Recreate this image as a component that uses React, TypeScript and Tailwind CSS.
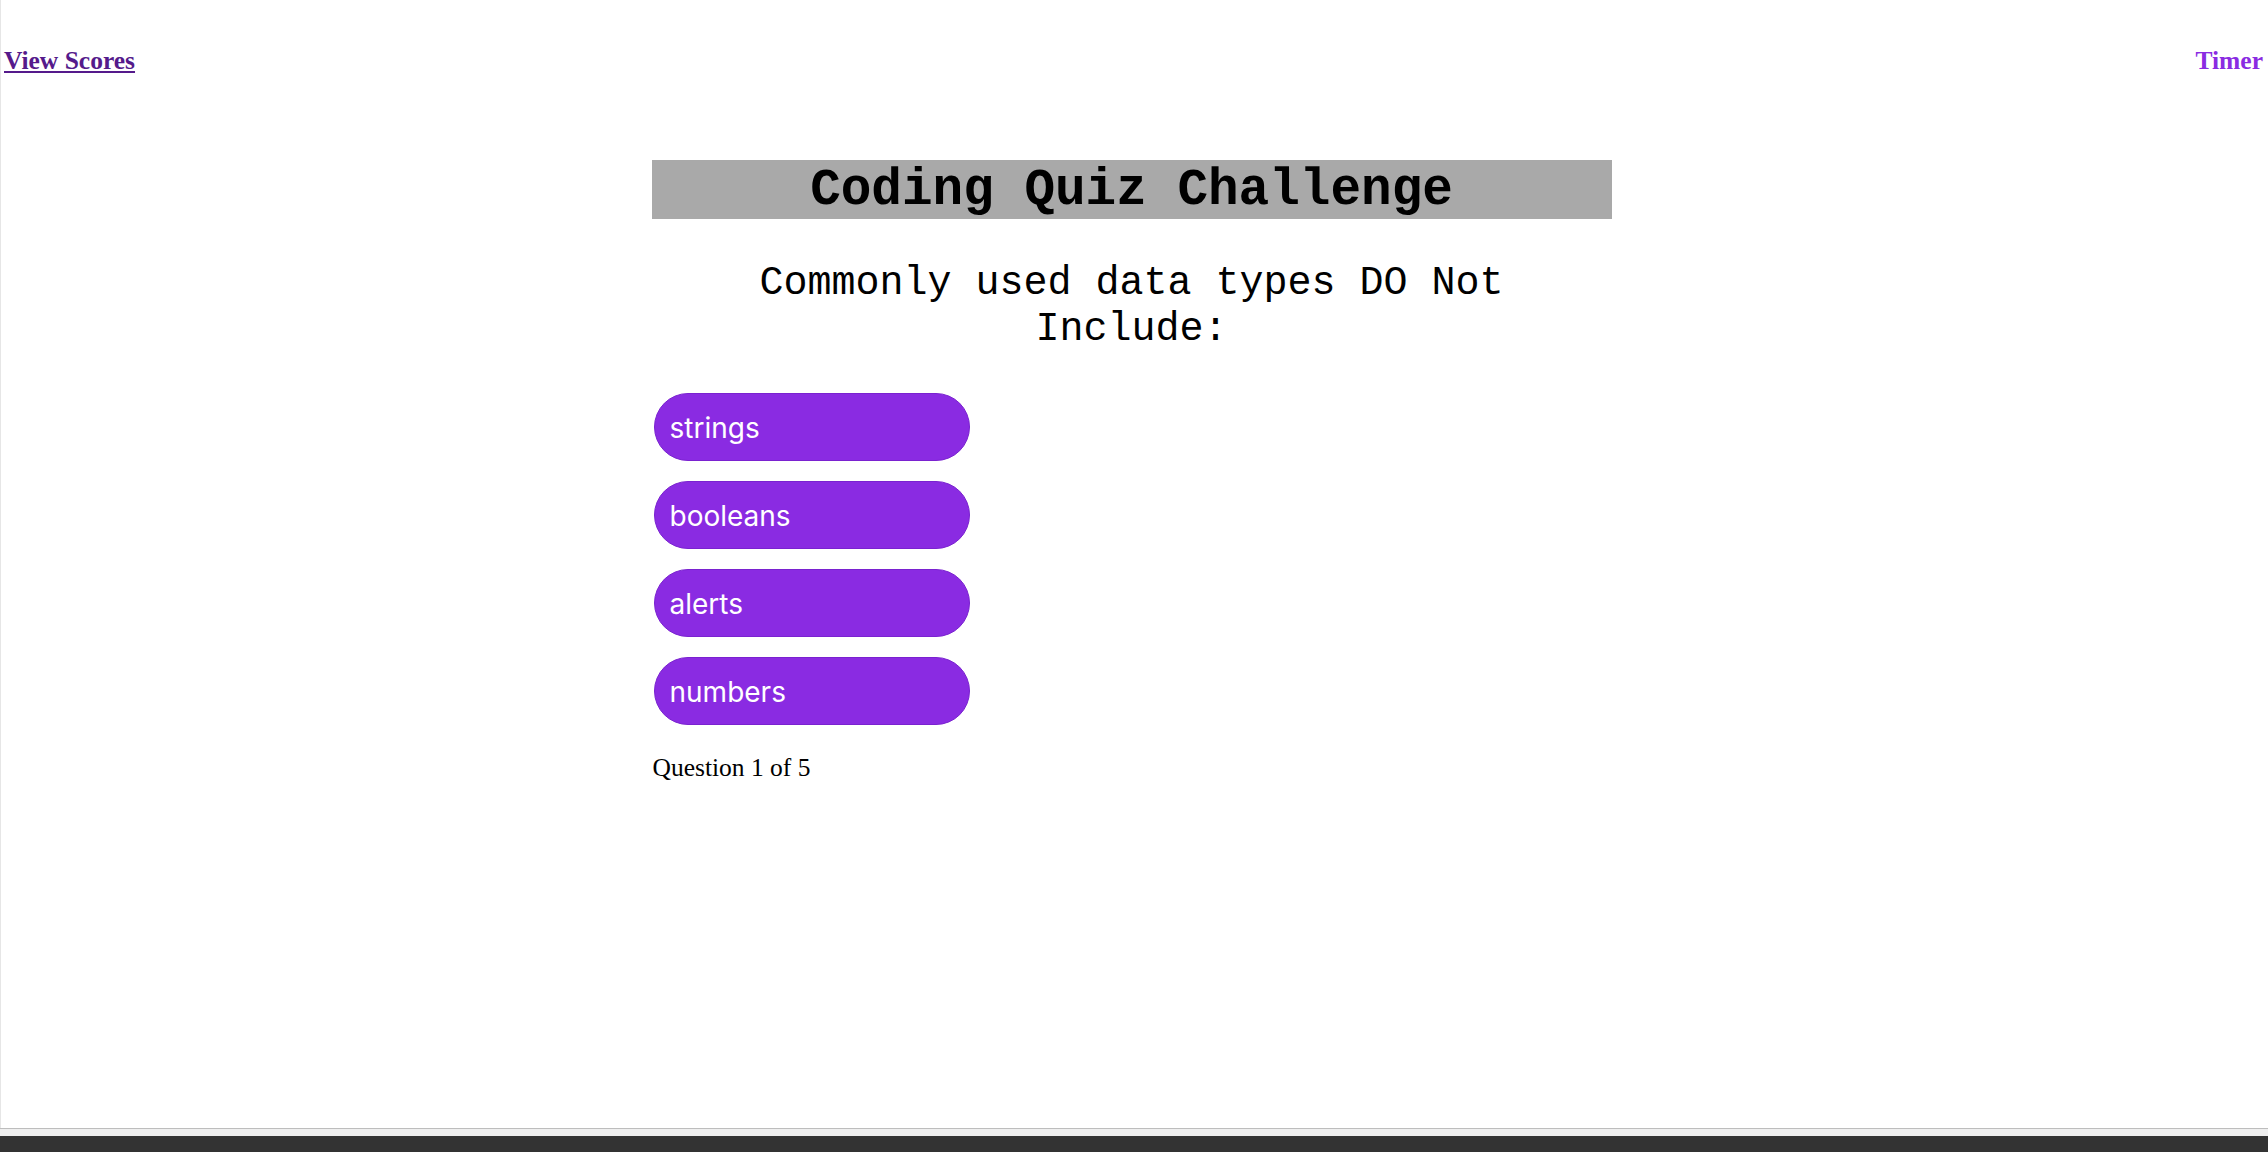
import { useState } from "react";

const choices = ["strings", "booleans", "alerts", "numbers"];

export default function App() {
  const [question] = useState(1);

  return (
    <div className="h-screen w-full flex flex-col bg-white overflow-hidden">
      {/* Page */}
      <div className="flex-1 border-l border-[#e6e6e6] flex flex-col">
        {/* Header */}
        <header className="flex items-center justify-between pl-[3px] pr-[5px] pt-[46px] font-['Liberation_Serif',serif] text-[25.5px] font-bold leading-[29px]">
          <a href="#" className="text-[#551a8b] underline">
            View Scores
          </a>
          <span className="text-[#8a2be2]">Timer</span>
        </header>

        {/* Quiz */}
        <main className="pr-[6px]">
          <div className="w-[960px] mx-auto mt-[85px]">
            <h1 className="bg-[#a9a9a9] h-[59px] pt-[2px] flex items-center justify-center font-['Liberation_Mono',monospace] font-bold text-[51px] text-black leading-none">
              Coding Quiz Challenge
            </h1>

            <p className="mt-[42px] px-[10px] text-center font-['Liberation_Mono',monospace] text-[40px] leading-[46px] text-black">
              Commonly used data types DO Not Include:
            </p>

            <div className="mt-[40px] flex flex-col gap-[20px] pl-[2px]">
              {choices.map((c) => (
                <button
                  key={c}
                  className="w-[316px] h-[68px] pt-[2px] rounded-full bg-[#8a2be2] border border-[#7a22d0] text-white text-left pl-[15px] font-['Inter',sans-serif] text-[28px]"
                >
                  {c}
                </button>
              ))}
            </div>

            <p className="mt-[24px] pl-[1px] font-['Liberation_Serif',serif] text-[25.5px] text-black">
              Question {question} of 5
            </p>
          </div>
        </main>
      </div>

      {/* Bottom strip */}
      <div className="h-[1px] bg-[#bdbdbd]" />
      <div className="h-[7px] bg-[#efefef]" />
      <div className="h-[16px] bg-[#333333]" />
    </div>
  );
}
